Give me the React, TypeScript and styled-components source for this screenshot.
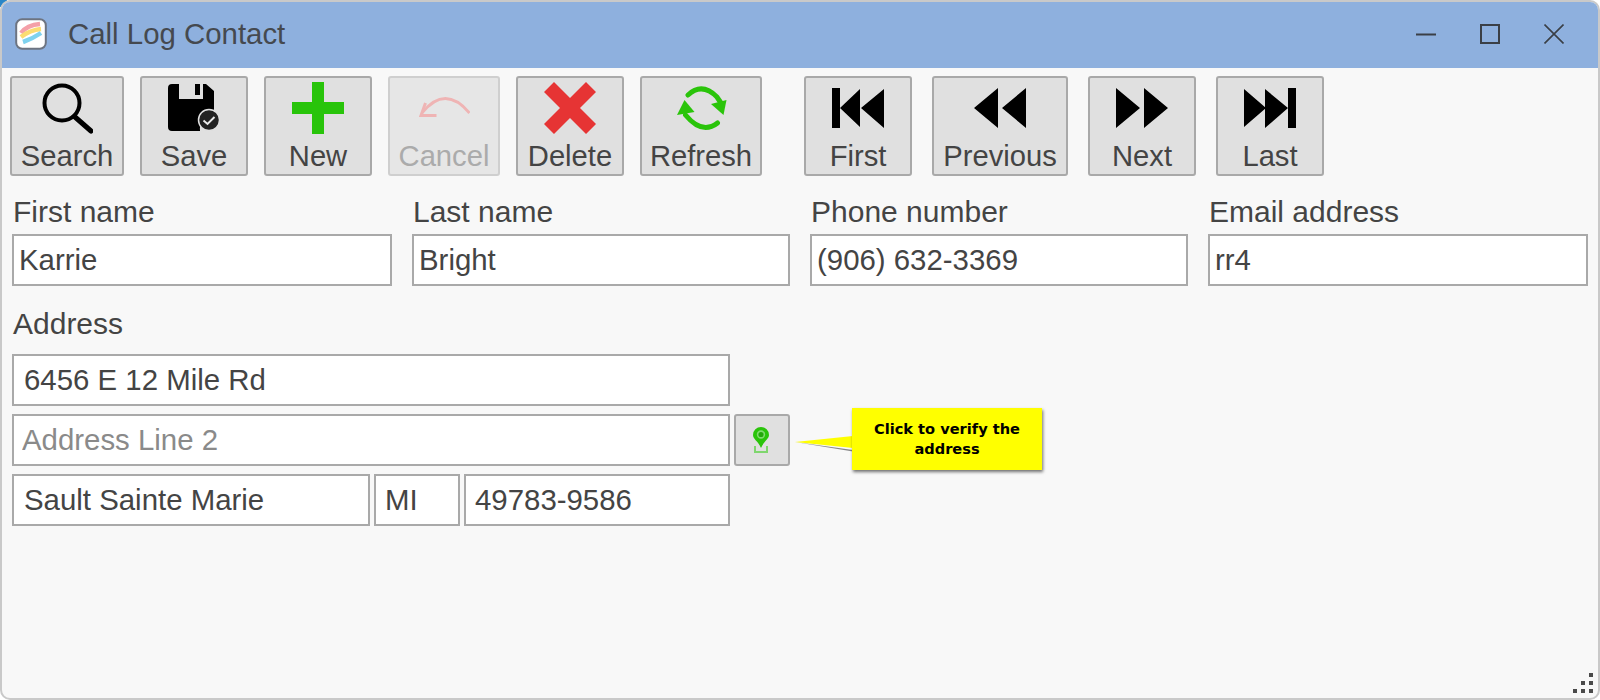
import { ReactNode } from "react";
import styled, { createGlobalStyle } from "styled-components";

const GlobalStyle = createGlobalStyle`
  html {
    background: linear-gradient(135deg, #2a86c8 5px, #ffffff 5px);
  }
  body {
    margin: 0;
    padding: 0;
  }
  * {
    box-sizing: border-box;
  }
`;

const Window = styled.div`
  position: relative;
  width: 1600px;
  height: 700px;
  display: flex;
  flex-direction: column;
  border: 2px solid #c9c9c9;
  border-radius: 10px;
  overflow: hidden;
  background: #f8f8f8;
  font-family: "Liberation Sans", Arial, sans-serif;
  color: #444444;
`;

const TitleBar = styled.div`
  height: 66px;
  flex: none;
  display: flex;
  align-items: center;
  padding: 0 12px 2px 13px;
  background: #8eb0de;
`;

const AppIcon = styled.svg`
  width: 32px;
  height: 32px;
  flex: none;
`;

const Title = styled.div`
  margin-left: 21px;
  flex: 1;
  font-size: 29.4px;
  color: #45494f;
`;

const WindowControl = styled.div`
  width: 64px;
  height: 40px;
  display: flex;
  align-items: center;
  justify-content: center;
`;

const Toolbar = styled.div`
  display: flex;
  padding: 8px 0 0 8px;
`;

const ToolGroup = styled.div`
  display: flex;
  gap: 16px;
`;

const NavGroup = styled.div`
  display: flex;
  gap: 20px;
  margin-left: 42px;
`;

const ToolButton = styled.div<{ $width: number; $disabled?: boolean }>`
  width: ${(p) => p.$width}px;
  height: 100px;
  display: flex;
  flex-direction: column;
  align-items: center;
  padding-top: 4px;
  border: 2px solid ${(p) => (p.$disabled ? "#cfcfcf" : "#a9a9a9")};
  border-radius: 3px;
  background: ${(p) => (p.$disabled ? "#e6e6e6" : "#e0e0e0")};
  color: ${(p) => (p.$disabled ? "#ababab" : "#444444")};
  font-size: 29.2px;
  line-height: 33px;
`;

const ToolIcon = styled.svg`
  width: 52px;
  height: 52px;
  flex: none;
  margin-bottom: 6px;
`;

const NameGrid = styled.div`
  display: grid;
  grid-template-columns: 380px 378px 378px 380px;
  column-gap: 20px;
  padding: 0 10px;
  margin-top: 17px;
`;

const Field = styled.div`
  display: flex;
  flex-direction: column;
`;

const FieldLabel = styled.div`
  font-size: 30px;
  line-height: 33px;
  height: 41px;
  padding: 2px 0 0 1px;
`;

const TextInput = styled.input<{ $inset: number; $width?: number }>`
  display: block;
  width: ${(p) => (p.$width ? `${p.$width}px` : "100%")};
  height: 52px;
  padding: 0 0 0 ${(p) => p.$inset}px;
  border: 2px solid #a9a9a9;
  border-radius: 0;
  outline: none;
  background: #ffffff;
  font-family: inherit;
  font-size: 29.4px;
  color: #444444;

  &::placeholder {
    color: #8a8a8a;
    opacity: 1;
  }
`;

const AddressSection = styled.div`
  padding: 0 10px;
  margin-top: 19px;
`;

const AddressLabel = styled(FieldLabel)`
  height: 49px;
`;

const AddressRow = styled.div`
  display: flex;
  gap: 4px;
  margin-bottom: 8px;
`;

const VerifyButton = styled.div`
  width: 56px;
  height: 52px;
  display: flex;
  align-items: center;
  justify-content: center;
  padding-right: 3px;
  border: 2px solid #a9a9a9;
  border-radius: 3px;
  background: #e0e0e0;
`;

const Callout = styled.div`
  position: absolute;
  left: 850px;
  top: 406px;
  width: 190px;
  height: 62px;
  display: flex;
  align-items: center;
  justify-content: center;
  padding: 0 10px;
  background: #ffff00;
  box-shadow: 1px 2px 3px rgba(0, 0, 0, 0.55);
  font-family: "DejaVu Sans", Verdana, sans-serif;
  font-size: 14.6px;
  font-weight: 700;
  line-height: 20px;
  text-align: center;
  color: #000000;
`;

const CalloutTail = styled.svg`
  position: absolute;
  left: 793px;
  top: 432px;
  width: 58px;
  height: 18px;
`;

const ResizeGrip = styled.svg`
  position: absolute;
  right: 2px;
  bottom: 3px;
  width: 24px;
  height: 24px;
`;

const SaveIcon = () => (
  <ToolIcon viewBox="0 0 52 52">
    <path
      d="M0 6q0-4 4-4h7v15h24V2h3l8 7v25a13 13 0 0 0-14 15H4q-4 0-4-4z"
      fill="#000"
    />
    <rect x="27" y="2" width="5" height="11" fill="#000" />
    <circle cx="41" cy="38" r="10.5" fill="#222" stroke="#e0e0e0" strokeWidth="1.5" />
    <path d="M35.5 38.5l4 3.5 7-7" fill="none" stroke="#e8e8e8" strokeWidth="2" />
  </ToolIcon>
);

const SearchIcon = () => (
  <ToolIcon viewBox="0 0 52 52">
    <circle cx="21" cy="21" r="17.5" fill="none" stroke="#000" strokeWidth="4" />
    <path d="M34 35l16 14" stroke="#000" strokeWidth="5" strokeLinecap="round" />
  </ToolIcon>
);

const PlusIcon = () => (
  <ToolIcon viewBox="0 0 52 52">
    <path d="M20 0h12v20h20v12H32v20H20V32H0V20h20z" fill="#28c40a" />
  </ToolIcon>
);

const UndoIcon = () => (
  <ToolIcon viewBox="0 0 52 52">
    <path d="M4 31Q27 2 51.5 31" fill="none" stroke="#efb4b4" strokeWidth="2.8" />
    <path d="M7.5 21L3 33.5H18.5" fill="none" stroke="#efb4b4" strokeWidth="3" />
  </ToolIcon>
);

const CrossIcon = () => (
  <ToolIcon viewBox="0 0 52 52">
    <path
      d="M10 0l16 16L42 0l10 10-16 16 16 16-10 10-16-16-16 16L0 42l16-16L0 10z"
      fill="#e63434"
    />
  </ToolIcon>
);

const RefreshIcon = () => (
  <ToolIcon viewBox="0 0 52 52">
    <g fill="none" stroke="#2ac40a" strokeWidth="5" strokeLinecap="round">
      <path d="M13 13Q27 0 42 15L46 21" />
      <path d="M10.5 33Q27 53 42.5 41" />
    </g>
    <path d="M2 33L9.5 18l10 12z" fill="#2ac40a" />
    <path d="M36 22l15.5-4-3 15z" fill="#2ac40a" />
  </ToolIcon>
);

const FirstIcon = () => (
  <ToolIcon viewBox="0 0 52 52">
    <rect x="0" y="6" width="8" height="40" fill="#000" />
    <path d="M8 26L28 7v38zM29 26L52 7v39z" fill="#000" />
  </ToolIcon>
);

const PreviousIcon = () => (
  <ToolIcon viewBox="0 0 52 52">
    <path d="M0 26L24 6v40zM28 26L52 6v40z" fill="#000" />
  </ToolIcon>
);

const NextIcon = () => (
  <ToolIcon viewBox="0 0 52 52">
    <path d="M0 6l24 20L0 46zM28 6l24 20-24 20z" fill="#000" />
  </ToolIcon>
);

const LastIcon = () => (
  <ToolIcon viewBox="0 0 52 52">
    <rect x="44" y="6" width="8" height="40" fill="#000" />
    <path d="M0 7l22 19L0 45zM21 7l23 19-23 20z" fill="#000" />
  </ToolIcon>
);

type ToolProps = {
  label: string;
  width: number;
  icon: ReactNode;
  disabled?: boolean;
};

const Tool = ({ label, width, icon, disabled }: ToolProps) => (
  <ToolButton $width={width} $disabled={disabled}>
    {icon}
    {label}
  </ToolButton>
);

const names = [
  { label: "First name", value: "Karrie" },
  { label: "Last name", value: "Bright" },
  { label: "Phone number", value: "(906) 632-3369" },
  { label: "Email address", value: "rr4" },
];

const gripDots = [
  [17, 2],
  [9, 10],
  [17, 10],
  [1, 18],
  [9, 18],
  [17, 18],
];

export default function App() {
  return (
    <Window>
      <GlobalStyle />
      <TitleBar>
        <AppIcon viewBox="0 0 32 32">
          <rect x="1.2" y="1.2" width="29.6" height="29.6" rx="6" fill="#fff" stroke="#6d7481" strokeWidth="2" />
          <path d="M6 15Q12 7 25 6" fill="none" stroke="#f4a0a8" strokeWidth="4.5" />
          <path d="M6 19Q15 12 26 11" fill="none" stroke="#fbdc72" strokeWidth="4.5" />
          <path d="M8 24Q17 21 26 15" fill="none" stroke="#7fd2ee" strokeWidth="4.5" />
        </AppIcon>
        <Title>Call Log Contact</Title>
        <WindowControl>
          <svg width="20" height="20" viewBox="0 0 20 20">
            <path d="M0 10.5h20" stroke="#3a3f46" strokeWidth="2" />
          </svg>
        </WindowControl>
        <WindowControl>
          <svg width="20" height="20" viewBox="0 0 20 20">
            <rect x="1" y="1" width="18" height="18" fill="none" stroke="#3a3f46" strokeWidth="2" />
          </svg>
        </WindowControl>
        <WindowControl>
          <svg width="20" height="20" viewBox="0 0 20 20">
            <path d="M0.5 0.5l19 19M19.5 0.5l-19 19" stroke="#3a3f46" strokeWidth="1.6" />
          </svg>
        </WindowControl>
      </TitleBar>

      <Toolbar>
        <ToolGroup>
          <Tool label="Search" width={114} icon={<SearchIcon />} />
          <Tool label="Save" width={108} icon={<SaveIcon />} />
          <Tool label="New" width={108} icon={<PlusIcon />} />
          <Tool label="Cancel" width={112} icon={<UndoIcon />} disabled />
          <Tool label="Delete" width={108} icon={<CrossIcon />} />
          <Tool label="Refresh" width={122} icon={<RefreshIcon />} />
        </ToolGroup>
        <NavGroup>
          <Tool label="First" width={108} icon={<FirstIcon />} />
          <Tool label="Previous" width={136} icon={<PreviousIcon />} />
          <Tool label="Next" width={108} icon={<NextIcon />} />
          <Tool label="Last" width={108} icon={<LastIcon />} />
        </NavGroup>
      </Toolbar>

      <NameGrid>
        {names.map((n) => (
          <Field key={n.label}>
            <FieldLabel>{n.label}</FieldLabel>
            <TextInput $inset={5} value={n.value} readOnly />
          </Field>
        ))}
      </NameGrid>

      <AddressSection>
        <AddressLabel>Address</AddressLabel>
        <AddressRow>
          <TextInput $inset={10} $width={718} value="6456 E 12 Mile Rd" readOnly />
        </AddressRow>
        <AddressRow>
          <TextInput $inset={8} $width={718} placeholder="Address Line 2" readOnly />
          <VerifyButton>
            <svg width="18" height="26" viewBox="0 0 18 26">
              <path d="M9 0a8 8 0 0 1 8 8c0 4-5 6-8 13C6 14 1 12 1 8a8 8 0 0 1 8-8z" fill="#2ac40a" />
              <circle cx="9" cy="7.5" r="3.4" fill="#23a80a" stroke="#7fdc6e" strokeWidth="1.6" />
              <path d="M3 19v6h12v-6" fill="none" stroke="#7fd66e" strokeWidth="2" />
            </svg>
          </VerifyButton>
        </AddressRow>
        <AddressRow>
          <TextInput $inset={10} $width={358} value="Sault Sainte Marie" readOnly />
          <TextInput $inset={9} $width={86} value="MI" readOnly />
          <TextInput $inset={9} $width={266} value="49783-9586" readOnly />
        </AddressRow>
      </AddressSection>

      <CalloutTail viewBox="0 0 58 18">
        <path d="M0 8L58 16v1.5z" fill="#555" opacity="0.7" />
        <path d="M0 8L58 2v12z" fill="#ffff00" />
      </CalloutTail>
      <Callout>Click to verify the address</Callout>

      <ResizeGrip viewBox="0 0 24 24">
        {gripDots.map(([x, y]) => (
          <rect key={`${x}-${y}`} x={x} y={y} width="4" height="4" fill="#4a4a4a" />
        ))}
      </ResizeGrip>
    </Window>
  );
}
